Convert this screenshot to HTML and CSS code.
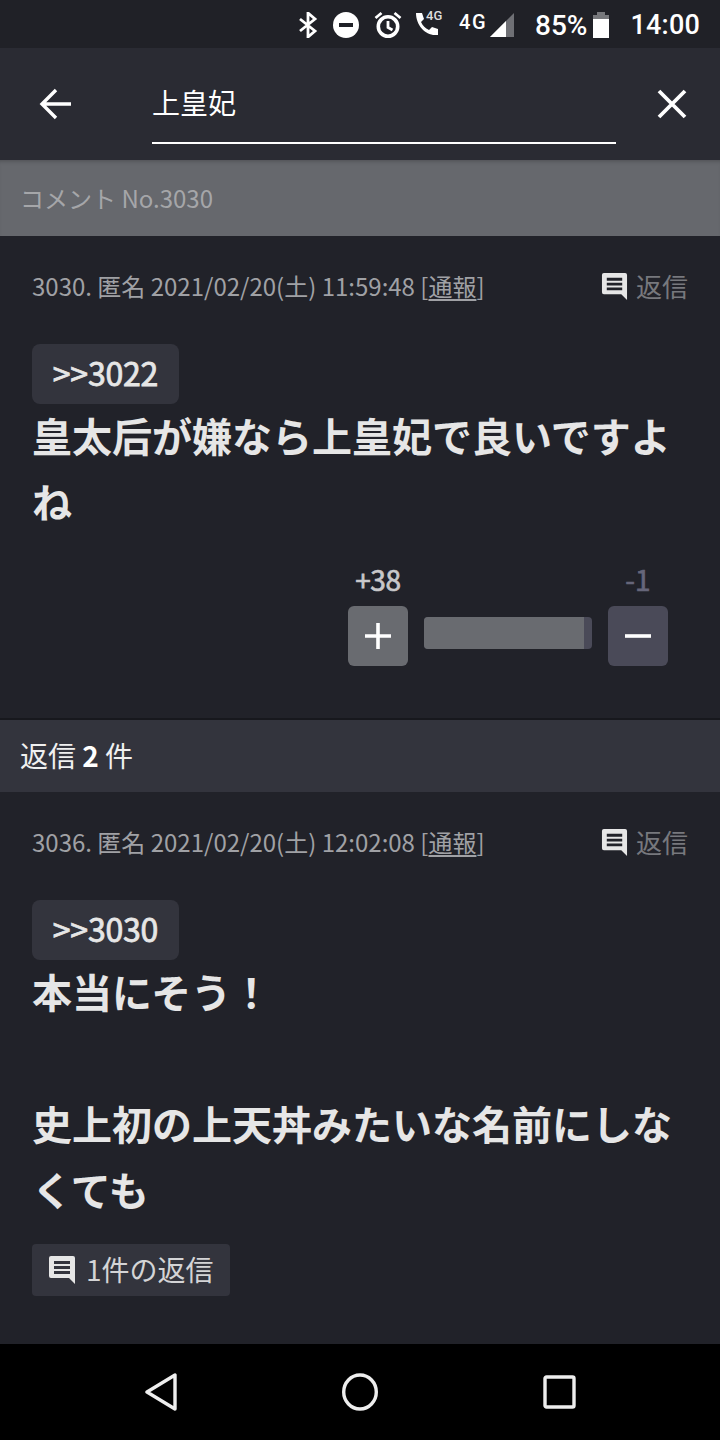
FILE: index.html
```html
<!DOCTYPE html>
<html lang="ja">
<head>
<meta charset="utf-8">
<title>上皇妃</title>
<link rel="stylesheet" href="styles.css">
</head>
<body>
<div class="status">
  <svg class="si bt" width="20" height="26" viewBox="0 0 20 26"><path d="M2 7l15 12-7 6V1l7 6L2 19" fill="none" stroke="#fff" stroke-width="2.800"/></svg>
  <svg class="si dnd" width="26" height="26" viewBox="0 0 26 26"><circle cx="13" cy="13" r="13" fill="#fff"/><rect x="6" y="11" width="14" height="4" fill="#202127"/></svg>
  <svg class="si alarm" width="28" height="28" viewBox="0 0 28 28"><circle cx="14" cy="15.500" r="9.700" fill="none" stroke="#fff" stroke-width="3.600"/><path d="M14 10v6.500l4.500 2.500" fill="none" stroke="#fff" stroke-width="2.800"/><path d="M1.500 7l6-5M26.500 7l-6-5" stroke="#fff" stroke-width="2.800"/></svg>
  <span class="call"><svg width="24" height="24" viewBox="0 0 24 24"><path d="M1 1h6l2 6-3 3c2 4 4 6 8 8l3-3 6 2v6h-3C10 23 1 13 1 1z" fill="#fff"/></svg><b class="tiny">4G</b></span>
  <span class="net"><b class="mid">4G</b><svg width="24" height="24" viewBox="0 0 24 24"><path d="M0 24L24 0v24z" fill="#6f7075"/><path d="M0 24L16 8v16z" fill="#fff"/></svg></span>
  <span class="pct">85%</span>
  <svg class="batt" width="18" height="28" viewBox="0 0 18 28"><path d="M5 1h8v3H5z" fill="#77787c"/><path d="M1 4h16v4H1z" fill="#77787c"/><path d="M1 8h16v19H1z" fill="#fff"/></svg>
  <span class="time">14:00</span>
</div>

<header class="bar">
  <svg class="back" width="36" height="36" viewBox="0 0 36 36"><path d="M33 18H6M18 4L4 18l14 14" fill="none" stroke="#fff" stroke-width="3.400"/></svg>
  <div class="search">上皇妃</div>
  <svg class="close" width="30" height="30" viewBox="0 0 30 30"><path d="M2 2l26 26M28 2L2 28" fill="none" stroke="#fff" stroke-width="3.800"/></svg>
</header>

<div class="crumb">コメント No.3030</div>

<section class="comment first">
  <div class="meta">
    <span>3030. 匿名 2021/02/20(土) 11:59:48 [<u>通報</u>]</span>
    <span class="reply"><svg class="bubble" width="27" height="27" viewBox="0 0 28 28"><path d="M3 0h22a2 2 0 0 1 2 2v26l-6-6H3a2 2 0 0 1-2-2V2a2 2 0 0 1 2-2z" fill="#e6e6e6"/><path d="M6 5h16v3H6zM6 10h16v3H6zM6 15h16v3H6z" fill="#212229"/></svg>返信</span>
  </div>
  <div class="anchor">&gt;&gt;3022</div>
  <p class="body">皇太后が嫌なら上皇妃で良いですよね</p>
  <div class="vote">
    <div class="counts"><span class="up">+38</span><span class="down">-1</span></div>
    <div class="ctrl">
      <div class="btn plus"><svg width="26" height="26" viewBox="0 0 26 26"><path d="M0 13h26M13 0v26" stroke="#fff" stroke-width="3.600"/></svg></div>
      <div class="meter"><div class="fill" style="width:95.2%"></div></div>
      <div class="btn minus"><svg width="26" height="26" viewBox="0 0 26 26"><path d="M0 13h26" stroke="#fff" stroke-width="3.600"/></svg></div>
    </div>
  </div>
</section>

<div class="count">返信 <b>2</b> 件</div>

<section class="comment second">
  <div class="meta">
    <span>3036. 匿名 2021/02/20(土) 12:02:08 [<u>通報</u>]</span>
    <span class="reply"><svg class="bubble" width="27" height="27" viewBox="0 0 28 28"><path d="M3 0h22a2 2 0 0 1 2 2v26l-6-6H3a2 2 0 0 1-2-2V2a2 2 0 0 1 2-2z" fill="#e6e6e6"/><path d="M6 5h16v3H6zM6 10h16v3H6zM6 15h16v3H6z" fill="#212229"/></svg>返信</span>
  </div>
  <div class="anchor">&gt;&gt;3030</div>
  <p class="body">本当にそう！<br><br>史上初の上天丼みたいな名前にしなくても</p>
  <div class="replies"><svg class="bubble" width="28" height="28" viewBox="0 0 28 28"><path d="M3 0h22a2 2 0 0 1 2 2v26l-6-6H3a2 2 0 0 1-2-2V2a2 2 0 0 1 2-2z" fill="#e6e6e6"/><path d="M6 5h16v3H6zM6 10h16v3H6zM6 15h16v3H6z" fill="#33343d"/></svg><span class="replies-text">1件の返信</span></div>
</section>

<nav class="nav">
  <svg class="nav-back" width="34" height="38" viewBox="0 0 34 38"><path d="M31 2v34L3 19z" fill="none" stroke="#eee" stroke-width="3.400" stroke-linejoin="round"/></svg>
  <svg class="nav-home" width="36" height="38" viewBox="0 0 36 38"><ellipse cx="18" cy="19" rx="16.300" ry="17" fill="none" stroke="#eee" stroke-width="3.400"/></svg>
  <svg class="nav-recent" width="33" height="34" viewBox="0 0 33 34"><rect x="2" y="2" width="29" height="30" rx="1.500" fill="none" stroke="#eee" stroke-width="3.400"/></svg>
</nav>
</body>
</html>
```

FILE: styles.css
```css
* { box-sizing: border-box; }
html, body { margin: 0; padding: 0; }
body {
  width: 720px;
  height: 1440px;
  overflow: hidden;
  background: #212229;
  color: #fff;
  font-family: "Noto Sans CJK JP", "Noto Sans", sans-serif;
  display: flex;
  flex-direction: column;
}
.status {
  height: 48px;
  background: #202127;
  display: flex;
  align-items: center;
  justify-content: flex-end;
  padding: 2px 20px 0 0;
  font-family: Roboto, sans-serif;
  flex: none;
}
.bt { margin-right: 15px; }
.dnd { margin-right: 15px; }
.alarm { margin-right: 13px; margin-top: -1px; }
.call { display: flex; align-items: flex-start; width: 29px; margin-right: 15px; margin-top: -2px; }
.call svg { flex: none; }
.tiny { font-size: 13px; font-weight: 500; line-height: 14px; margin-left: -13px; margin-top: -3px; color: #ddd; }
.net { display: flex; align-items: flex-start; margin-right: 21px; }
.mid { font-size: 20px; font-weight: 500; line-height: 18px; margin-right: 3px; letter-spacing: 1.500px; }
.pct { font-size: 28px; font-weight: 500; }
.batt { margin: 0 20px 0 5px; }
.time { font-size: 27px; font-weight: 500; letter-spacing: .2px; }
.bar {
  height: 112px;
  background: #2a2b33;
  display: flex;
  align-items: center;
  padding-left: 38px;
  flex: none;
}
.back { margin-right: 78px; }
.search {
  width: 464px;
  height: 96px;
  border-bottom: 2px solid #fff;
  font-size: 28px;
  line-height: 108px;
  margin-top: -16px;
  margin-right: 41px;
}
.crumb {
  height: 76px;
  background: #66686d;
  color: #a5a6a9;
  font-size: 24px;
  line-height: 76px;
  padding-left: 20px;
  flex: none;
  box-shadow: inset 0 4px 4px -3px rgba(0,0,0,.25);
}
.comment { padding: 0 32px; flex: none; }
.first { height: 482px; padding-top: 32px; }
.second { height: 552px; padding-top: 32px; }
.meta {
  display: flex;
  justify-content: space-between;
  height: 40px;
  line-height: 36px;
  font-size: 24px;
  color: #a0a1a5;
}
.meta u { text-underline-offset: 3px; }
.reply { display: flex; align-items: center; height: 36px; color: #77787d; font-size: 26px; }
.bubble { margin-right: 8px; flex: none; }
.anchor {
  margin-top: 36px;
  width: 147px;
  height: 60px;
  background: #33343d;
  border-radius: 8px;
  text-align: center;
  font-size: 32px;
  font-weight: 400;
  -webkit-text-stroke: .8px #e6e6e6;
  line-height: 56px;
  color: #e6e6e6;
  letter-spacing: -.2px;
}
.body {
  margin: -2px 0 0;
  font-size: 40px;
  font-weight: 700;
  line-height: 66px;
  color: #e6e6e6;
}
.vote { margin-top: 27px; margin-left: auto; margin-right: 20px; width: 320px; }
.counts { display: flex; justify-content: space-between; font-size: 28px; font-weight: 400; -webkit-text-stroke: .7px; line-height: 36px; }
.up { width: 60px; text-align: center; color: #c8c8ca; letter-spacing: -.3px; }
.down { width: 60px; text-align: center; color: #66667a; }
.ctrl { display: flex; align-items: flex-start; margin-top: 9px; }
.btn { width: 60px; height: 60px; border-radius: 6px; display: flex; align-items: center; justify-content: center; flex: none; }
.plus { background: #696b70; }
.minus { background: #4a4a58; }
.meter { width: 168px; height: 32px; margin: 11px 16px 0; background: #4a4a58; border-radius: 4px; overflow: hidden; }
.fill { height: 100%; background: #696b70; }
.count {
  height: 74px;
  border-top: 2px solid #17181d;
  background: #33343d;
  font-size: 28px;
  line-height: 70px;
  padding-left: 20px;
  flex: none;
  color: #f0f0f0;
}
.count b { font-weight: 700; color: #fff; }
.replies {
  margin-top: 22px;
  width: 198px;
  height: 52px;
  background: #33343d;
  border-radius: 4px;
  display: flex;
  align-items: center;
  padding-left: 16px;
  font-size: 28px;
  color: #d4d4d6;
}
.replies .bubble { margin-right: 10px; }
.replies-text { padding-bottom: 2px; line-height: 40px; }
.nav {
  height: 96px;
  background: #000;
  display: flex;
  align-items: center;
  padding-left: 144px;
  flex: none;
}
.nav-back { margin-right: 164px; }
.nav-home { margin-right: 165px; }
```
